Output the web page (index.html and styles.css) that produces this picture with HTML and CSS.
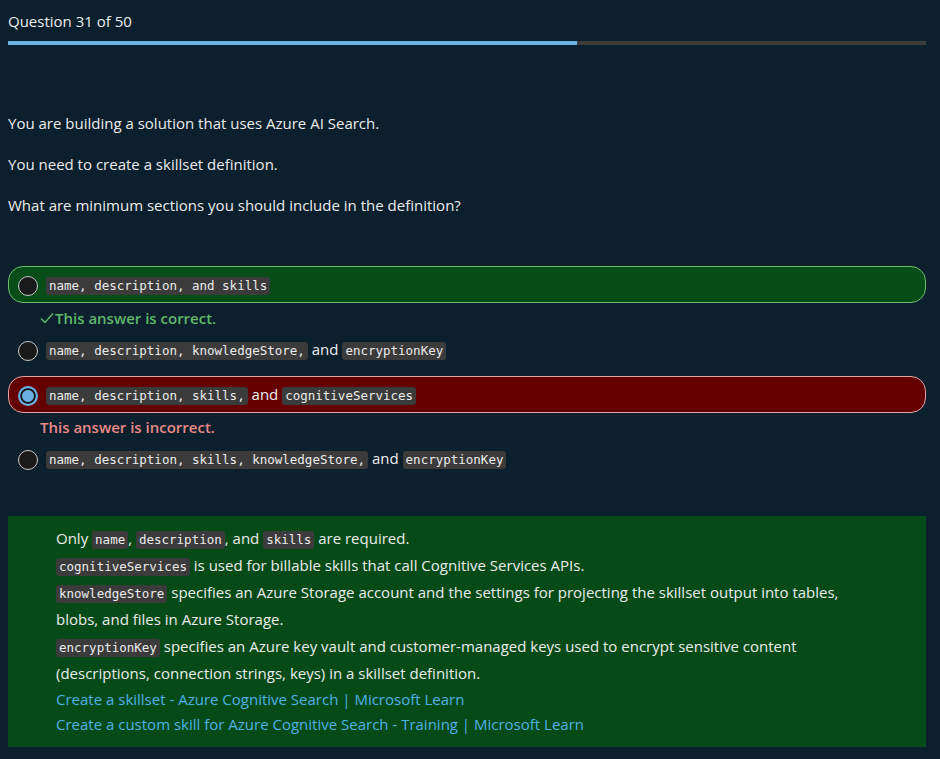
FILE: index.html
```html
<!DOCTYPE html>
<html lang="en">
<head>
<meta charset="utf-8">
<title>Question 31 of 50</title>
<link rel="stylesheet" href="styles.css">
</head>
<body>
<div class="page">
  <div class="title">Question 31 of 50</div>
  <div class="progress"><div class="progress-fill" style="width: 62%"></div></div>

  <div class="question">
    <p>You are building a solution that uses Azure AI Search.</p>
    <p>You need to create a skillset definition.</p>
    <p>What are minimum sections you should include in the definition?</p>
  </div>

  <div class="options">
    <div class="option correct">
      <span class="radio"></span>
      <span class="label"><code>name, description, and skills</code></span>
    </div>
    <div class="feedback ok"><svg class="check" width="14" height="12" viewBox="0 0 14 12"><polyline points="1,6.5 5,10.5 13,1.5" fill="none" stroke="currentColor" stroke-width="1.4"/></svg>This answer is correct.</div>

    <div class="option">
      <span class="radio"></span>
      <span class="label"><code>name, description, knowledgeStore,</code> and <code>encryptionKey</code></span>
    </div>

    <div class="option wrong">
      <span class="radio selected"></span>
      <span class="label"><code>name, description, skills,</code> and <code>cognitiveServices</code></span>
    </div>
    <div class="feedback bad">This answer is incorrect.</div>

    <div class="option">
      <span class="radio"></span>
      <span class="label"><code>name, description, skills, knowledgeStore,</code> and <code>encryptionKey</code></span>
    </div>
  </div>

  <div class="explanation">
    <p>Only <code>name</code>, <code>description</code>, and <code>skills</code> are required.</p>
    <p><code>cognitiveServices</code> is used for billable skills that call Cognitive Services APIs.</p>
    <p><code>knowledgeStore</code> specifies an Azure Storage account and the settings for projecting the skillset output into tables, blobs, and files in Azure Storage.</p>
    <p><code>encryptionKey</code> specifies an Azure key vault and customer-managed keys used to encrypt sensitive content (descriptions, connection strings, keys) in a skillset definition.</p>
    <p class="link"><a href="#">Create a skillset - Azure Cognitive Search | Microsoft Learn</a></p>
    <p class="link"><a href="#">Create a custom skill for Azure Cognitive Search - Training | Microsoft Learn</a></p>
  </div>
</div>
</body>
</html>
```

FILE: styles.css
```css
html, body {
  margin: 0;
  padding: 0;
  background: #0b1f2d;
}

.page {
  padding: 0 14px 14px 8px;
  color: #ececec;
  font-family: "Open Sans", "Noto Sans", sans-serif;
  font-size: 15px;
}

.title {
  margin-top: 11px;
  line-height: 20px;
  height: 20px;
}

.progress {
  margin-top: 10px;
  height: 4px;
  background: #3c3c3c;
}

.progress-fill {
  height: 100%;
  background: #6cb2e4;
}

.question {
  margin-top: 68px;
}

.question p {
  margin: 0 0 21px 0;
  line-height: 20px;
}

.question p:last-child {
  margin-bottom: 0;
}

.options {
  margin-top: 51px;
  display: flex;
  flex-direction: column;
}

.option {
  display: flex;
  align-items: center;
  gap: 8px;
  height: 37px;
  box-sizing: border-box;
  padding-left: 9px;
  border: 1px solid transparent;
  border-radius: 15px;
  margin-bottom: 8px;
}

.option.correct {
  background: #084d18;
  border-color: #6dbc6d;
  margin-bottom: 0;
}

.option.wrong {
  background: #640000;
  border-color: #e3a3a3;
  margin-bottom: 0;
}

.radio {
  width: 20px;
  height: 20px;
  box-sizing: border-box;
  border-radius: 50%;
  border: 1px solid #c8c8c8;
  background: #1a1a1a;
  flex: none;
  margin-top: 2px;
}

.radio.selected {
  border: 2px solid #6cb2e4;
  background: #6cb2e4;
  box-shadow: inset 0 0 0 2px #1a1a1a;
}

.label {
  line-height: 20px;
}

code {
  display: inline-block;
  font-family: "DejaVu Sans Mono", "Liberation Mono", monospace;
  font-size: 12.5px;
  line-height: 14px;
  background: #3b3b3b;
  color: #ececec;
  border-radius: 3px;
  padding: 2px 3px;
}

.feedback {
  display: flex;
  align-items: center;
  padding-left: 32px;
  line-height: 20px;
  margin: 5px 0 3px 0;
  font-weight: 600;
  font-size: 15px;
}

.feedback.ok {
  color: #5fb86a;
}

.feedback.bad {
  color: #e88a8a;
  margin-top: 4px;
}

.check {
  flex: none;
  margin-right: 1px;
}

.explanation {
  margin-top: 31px;
  background: #064b17;
  padding: 9px 48px 10px 48px;
  font-size: 15px;
}

.explanation p {
  margin: 0;
  line-height: 27px;
}

.explanation p.link {
  line-height: 25px;
}

.explanation a {
  color: #4fb0e6;
  text-decoration: none;
}
```
